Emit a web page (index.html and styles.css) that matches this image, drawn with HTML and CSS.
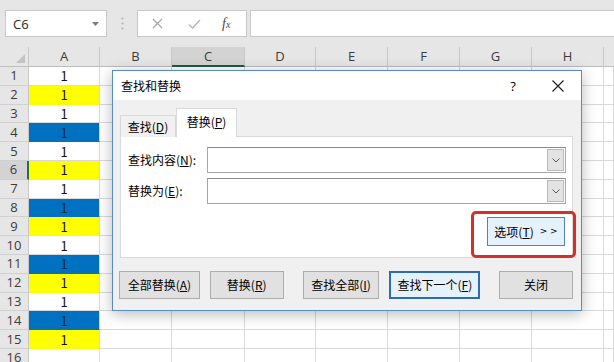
FILE: index.html
```html
<!DOCTYPE html>
<html lang="zh">
<head>
<meta charset="utf-8">
<title>查找和替换</title>
<link rel="stylesheet" href="styles.css">
</head>
<body>
<div class="app">
  <div class="toolbar">
    <div class="namebox"><span>C6</span><svg class="nb-arrow" width="7" height="4" viewBox="0 0 7 4"><path d="M0 0H7L3.5 4Z" fill="#7a7a7a"/></svg></div>
    <div class="sep"><svg width="3" height="13" viewBox="0 0 3 13"><circle cx="1.5" cy="1.5" r="1.1" fill="#b4b4b4"/><circle cx="1.5" cy="6.5" r="1.1" fill="#b4b4b4"/><circle cx="1.5" cy="11.5" r="1.1" fill="#b4b4b4"/></svg></div>
    <div class="fbtns">
      <svg class="ico-x" width="11" height="11" viewBox="0 0 11 11"><path d="M1 1L10 10M10 1L1 10" stroke="#a9a9a9" stroke-width="1.3" fill="none"/></svg>
      <svg class="ico-ok" width="13" height="10" viewBox="0 0 13 10"><path d="M1 5.5L4.5 9L12 1" stroke="#b5b5b5" stroke-width="1.3" fill="none"/></svg>
      <span class="fx">f<small>x</small></span>
    </div>
    <div class="finput"></div>
  </div>

  <div class="grid">
    <div class="corner"><svg width="9" height="9" viewBox="0 0 9 9"><path d="M9 0V9H0Z" fill="#c3c3c3"/></svg></div>
    <div class="ch">A</div><div class="ch">B</div><div class="ch sel">C</div><div class="ch">D</div><div class="ch">E</div><div class="ch">F</div><div class="ch">G</div><div class="ch">H</div><div class="ch last"></div>

    <div class="rh">1</div><div class="c v">1</div><div class="c"></div><div class="c"></div><div class="c"></div><div class="c"></div><div class="c"></div><div class="c"></div><div class="c"></div><div class="c"></div>
    <div class="rh">2</div><div class="c v y">1</div><div class="c"></div><div class="c"></div><div class="c"></div><div class="c"></div><div class="c"></div><div class="c"></div><div class="c"></div><div class="c"></div>
    <div class="rh">3</div><div class="c v">1</div><div class="c"></div><div class="c"></div><div class="c"></div><div class="c"></div><div class="c"></div><div class="c"></div><div class="c"></div><div class="c"></div>
    <div class="rh">4</div><div class="c v b">1</div><div class="c"></div><div class="c"></div><div class="c"></div><div class="c"></div><div class="c"></div><div class="c"></div><div class="c"></div><div class="c"></div>
    <div class="rh">5</div><div class="c v">1</div><div class="c"></div><div class="c"></div><div class="c"></div><div class="c"></div><div class="c"></div><div class="c"></div><div class="c"></div><div class="c"></div>
    <div class="rh rsel">6</div><div class="c v y">1</div><div class="c"></div><div class="c"></div><div class="c"></div><div class="c"></div><div class="c"></div><div class="c"></div><div class="c"></div><div class="c"></div>
    <div class="rh">7</div><div class="c v">1</div><div class="c"></div><div class="c"></div><div class="c"></div><div class="c"></div><div class="c"></div><div class="c"></div><div class="c"></div><div class="c"></div>
    <div class="rh">8</div><div class="c v b">1</div><div class="c"></div><div class="c"></div><div class="c"></div><div class="c"></div><div class="c"></div><div class="c"></div><div class="c"></div><div class="c"></div>
    <div class="rh">9</div><div class="c v y">1</div><div class="c"></div><div class="c"></div><div class="c"></div><div class="c"></div><div class="c"></div><div class="c"></div><div class="c"></div><div class="c"></div>
    <div class="rh">10</div><div class="c v">1</div><div class="c"></div><div class="c"></div><div class="c"></div><div class="c"></div><div class="c"></div><div class="c"></div><div class="c"></div><div class="c"></div>
    <div class="rh">11</div><div class="c v b">1</div><div class="c"></div><div class="c"></div><div class="c"></div><div class="c"></div><div class="c"></div><div class="c"></div><div class="c"></div><div class="c"></div>
    <div class="rh">12</div><div class="c v y">1</div><div class="c"></div><div class="c"></div><div class="c"></div><div class="c"></div><div class="c"></div><div class="c"></div><div class="c"></div><div class="c"></div>
    <div class="rh">13</div><div class="c v">1</div><div class="c"></div><div class="c"></div><div class="c"></div><div class="c"></div><div class="c"></div><div class="c"></div><div class="c"></div><div class="c"></div>
    <div class="rh">14</div><div class="c v b">1</div><div class="c"></div><div class="c"></div><div class="c"></div><div class="c"></div><div class="c"></div><div class="c"></div><div class="c"></div><div class="c"></div>
    <div class="rh">15</div><div class="c v y">1</div><div class="c"></div><div class="c"></div><div class="c"></div><div class="c"></div><div class="c"></div><div class="c"></div><div class="c"></div><div class="c"></div>
    <div class="rh">16</div><div class="c"></div><div class="c"></div><div class="c"></div><div class="c"></div><div class="c"></div><div class="c"></div><div class="c"></div><div class="c"></div><div class="c"></div>
  </div>

  <div class="dlg">
    <div class="titlebar">
      <span class="title">查找和替换</span>
      <span class="help">?</span>
      <span class="close"><svg width="12" height="12" viewBox="0 0 12 12"><path d="M0.5 0.5L11.5 11.5M11.5 0.5L0.5 11.5" stroke="#1a1a1a" stroke-width="1.1" fill="none"/></svg></span>
    </div>
    <div class="dbody">
      <div class="tabs">
        <div class="tab">查找(<u>D</u>)</div>
        <div class="tab active">替换(<u>P</u>)</div>
      </div>
      <div class="panel">
        <div class="frow">
          <label class="flabel">查找内容(<u>N</u>):</label>
          <div class="combo"><div class="cbtn"><svg width="8" height="5" viewBox="0 0 8 5"><path d="M0.5 0.5L4 4L7.5 0.5" stroke="#5a5a5a" stroke-width="1" fill="none"/></svg></div></div>
        </div>
        <div class="frow r2">
          <label class="flabel">替换为(<u>E</u>):</label>
          <div class="combo"><div class="cbtn"><svg width="8" height="5" viewBox="0 0 8 5"><path d="M0.5 0.5L4 4L7.5 0.5" stroke="#5a5a5a" stroke-width="1" fill="none"/></svg></div></div>
        </div>
        <div class="orow">
          <div class="btn opt">选项(<u>T</u>) <span class="gg">&gt; &gt;</span></div>
        </div>
      </div>
      <div class="brow">
        <div class="btn b1">全部替换(<u>A</u>)</div>
        <div class="btn b2">替换(<u>R</u>)</div>
        <div class="btn b3">查找全部(<u>I</u>)</div>
        <div class="btn b4 def">查找下一个(<u>F</u>)</div>
        <div class="btn b5">关闭</div>
      </div>
    </div>
    <div class="mark"></div>
  </div>
</div>
</body>
</html>
```
FILE: styles.css
```css
* { box-sizing: border-box; margin: 0; padding: 0; }
html, body { width: 614px; height: 362px; overflow: hidden; }
body { background: #fff; font-family: "Open Sans", "Noto Sans CJK SC", sans-serif; }
.app { position: relative; width: 614px; height: 362px; overflow: hidden; }

/* toolbar */
.toolbar { height: 47px; background: #e6e6e6; display: flex; align-items: flex-start; padding-top: 10px; }
.namebox { margin-left: 5px; width: 102px; height: 27px; background: #fff; border: 1px solid #c9c9c9;
  display: flex; align-items: center; justify-content: space-between; padding: 0 7px 0 7px;
  font-size: 13px; color: #262626; }
.sep { width: 30px; height: 27px; display: flex; align-items: center; justify-content: center; }
.fbtns { width: 110px; height: 27px; background: #fff; border: 1px solid #c9c9c9; display: flex; align-items: center; }
.ico-x { margin-left: 14px; }
.ico-ok { margin-left: 25px; }
.fx { margin-left: 21px; font-family: "Liberation Serif", serif; font-style: italic; font-size: 14px; color: #4a4a4a; }
.fx small { font-size: 10px; }
.finput { flex: 1; height: 27px; margin-left: 3px; margin-right: -2px; background: #fff; border: 1px solid #c9c9c9; }

/* grid */
.grid { display: grid; grid-template-columns: 29px 71px 72px 73px 71px 72px 72px 72px 72px 1fr;
  grid-template-rows: 20px repeat(16, 18.8px); }
.corner { background: #e6e6e6; border-right: 1px solid #c8c8c8; border-bottom: 1px solid #bdbdbd;
  display: flex; align-items: flex-end; justify-content: flex-end; padding: 0 3px 3px 0; }
.ch { background: #e6e6e6; border-right: 1px solid #c8c8c8; border-bottom: 1px solid #bdbdbd;
  font-size: 13px; color: #3b3b3b; display: flex; align-items: center; justify-content: center; line-height: 1; }
.ch.sel { background: #d3d3d3; border-bottom: 2px solid #1e5c40; }
.ch.last { border-right: none; }
.rh { background: #e6e6e6; border-right: 1px solid #c8c8c8; border-bottom: 1px solid #d0d0d0;
  font-size: 13px; color: #3b3b3b; display: flex; align-items: center; justify-content: center; line-height: 1; }
.rh.rsel { background: #d3d3d3; border-right: 2px solid #217346; }
.c { border-right: 1px solid #d9d9d9; border-bottom: 1px solid #d9d9d9; background: #fff; }
.c.v { font-family: "Noto Sans CJK SC", sans-serif; font-size: 13px; color: #111; display: flex; align-items: center; justify-content: center; line-height: 1; }
.c.y { background: #ffff00; border-bottom-color: #ffff00; }
.c.b { background: #0070c0; border-bottom-color: #0070c0; color: #0d2a44; }

/* dialog */
.dlg { position: absolute; left: 112px; top: 70px; width: 470px; height: 241px; background: #f0f0f0;
  border: 1px solid #5a8cc2; box-shadow: 0 3px 14px rgba(0, 0, 0, 0.28);
  font-family: "Noto Sans CJK SC", sans-serif; font-size: 12px; color: #000; display: flex; flex-direction: column; }
.titlebar { height: 29px; background: #fff; display: flex; align-items: center; padding-left: 8px; }
.title { flex: 1; font-size: 12px; }
.help { width: 30px; margin-right: 7px; text-align: center; font-family: "Open Sans", sans-serif; font-size: 13px; }
.close { width: 46px; display: flex; justify-content: center; }
.dbody { flex: 1; padding: 9px 8px 0 7px; display: flex; flex-direction: column; }
.tabs { height: 28px; display: flex; align-items: flex-end; margin-bottom: -1px; position: relative; z-index: 1; }
.tab { width: 56px; height: 22px; border: 1px solid #d9d9d9; border-bottom: none; background: #f0f0f0;
  display: flex; align-items: center; justify-content: center; line-height: 1; }
.tab.active { width: 61px; height: 29px; background: #fff; margin-left: 0; padding-bottom: 3px; }
.panel { height: 122px; background: #fff; border: 1px solid #d9d9d9; padding: 10px 6px 0 7px; }
.frow { height: 26px; display: flex; align-items: center; }
.frow.r2 { margin-top: 5px; }
.flabel { width: 79px; line-height: 1; }
.combo { flex: 1; height: 26px; border: 1px solid #a6a6a6; border-top-color: #8a8a8a; background: #fff;
  display: flex; justify-content: flex-end; padding: 1px; }
.cbtn { width: 17px; background: #e3e3e3; border: 1px solid #b9b9b9; display: flex; align-items: center; justify-content: center; }
.orow { margin-top: 13px; display: flex; justify-content: flex-end; padding-right: 1px; }
.btn { height: 28px; background: #e1e1e1; border: 1px solid #adadad; display: flex; align-items: center; justify-content: center; line-height: 1; }
.btn.opt { width: 78px; height: 29px; background: #e5f1fb; border-color: #4f86b9; }
.gg { font-family: "DejaVu Sans", sans-serif; font-size: 9px; margin-left: 6px; letter-spacing: 0; }
.brow { margin-top: 13px; display: flex; }
.b1 { width: 81px; margin-left: -1px; }
.b2 { width: 74px; margin-left: 10px; }
.b3 { width: 77px; margin-left: 19px; }
.b4 { width: 91px; margin-left: 10px; }
.b5 { width: 74px; margin-left: 19px; }
.btn.def { background: #e5f1fb; border: 2px solid #2a6eb0; }
.mark { position: absolute; left: 358px; top: 140px; width: 105px; height: 47px; border: 3px solid #d3302a; border-radius: 5px; }
```
